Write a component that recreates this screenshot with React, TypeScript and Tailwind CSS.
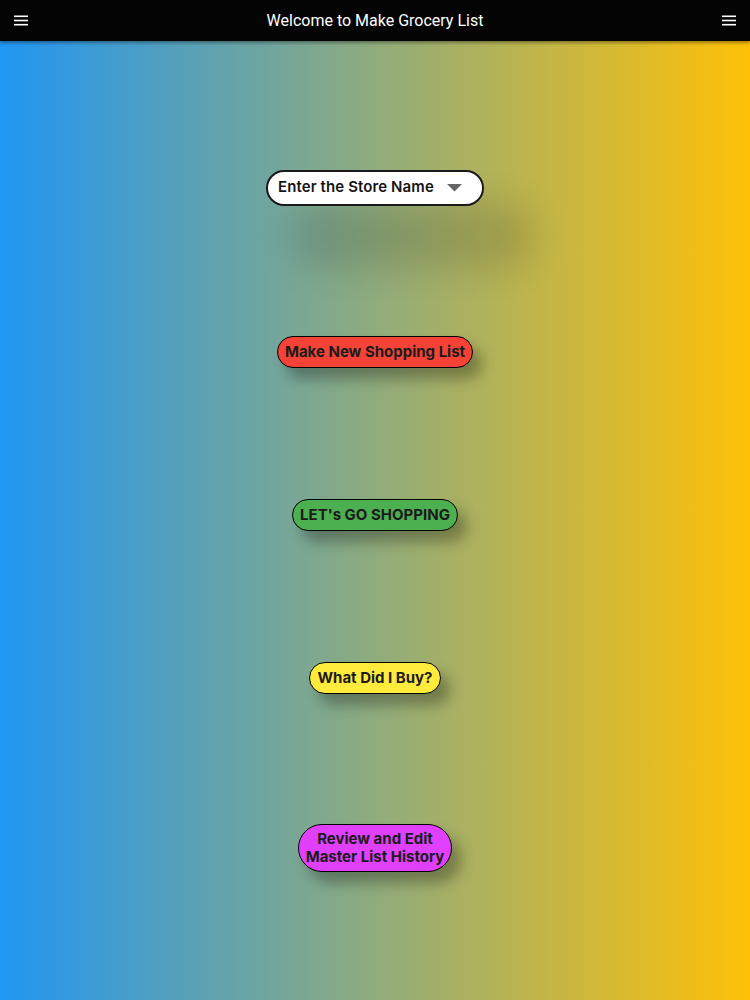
import React from "react";

function Burger() {
  return (
    <svg width="14" height="11" viewBox="0 0 14 11" className="block">
      <rect x="0" y="0.5" width="14" height="1.6" fill="white" />
      <rect x="0" y="4.7" width="14" height="1.6" fill="white" />
      <rect x="0" y="8.9" width="14" height="1.6" fill="white" />
    </svg>
  );
}

const btn =
  "rounded-full border-[1.5px] border-black text-[#1b1b1b] font-bold text-[15px] leading-[18px] px-[7px] pb-[1px] shadow-[9px_11px_14px_rgba(0,0,0,0.3)]";

export default function App() {
  return (
    <div
      className="w-[750px] h-[1000px] flex flex-col bg-[linear-gradient(to_right,#2196f3,#ffc107)]"
      style={{ fontFamily: "Inter, 'Noto Sans', sans-serif" }}
    >
      <header className="h-[41px] bg-[#040404] flex items-center justify-between px-[14px] shadow-[0_2px_3px_rgba(0,0,0,0.35)] relative z-10">
        <Burger />
        <div className="text-white text-[16px] font-normal" style={{ fontFamily: "Roboto, 'Noto Sans', sans-serif" }}>
          Welcome to Make Grocery List
        </div>
        <Burger />
      </header>
      <main className="flex flex-col items-center pt-[129px]">
        <div className="w-[218px] h-[36px] bg-white rounded-full border-2 border-[#1a1a1a] flex items-center pl-[10px] pr-[20px] pb-[1px] justify-between shadow-[38px_48px_36px_14px_rgba(0,0,0,0.13)]">
          <span className="text-[15px] font-semibold text-[#151515] tracking-[0.1px]">Enter the Store Name</span>
          <svg width="15" height="8" viewBox="0 0 15 8">
            <polygon points="0,0 15,0 7.5,7.5" fill="#666" />
          </svg>
        </div>
        <button className={`${btn} mt-[130px] h-[32px] bg-[#f44336]`}>Make New Shopping List</button>
        <button className={`${btn} mt-[131px] h-[32px] bg-[#4caf50]`}>LET's GO SHOPPING</button>
        <button className={`${btn} mt-[131px] h-[32px] bg-[#ffeb3b]`}>What Did I Buy?</button>
        <button className={`${btn} mt-[130px] h-[48px] bg-[#e040fb] text-center`}>
          Review and Edit
          <br />
          Master List History
        </button>
      </main>
    </div>
  );
}
